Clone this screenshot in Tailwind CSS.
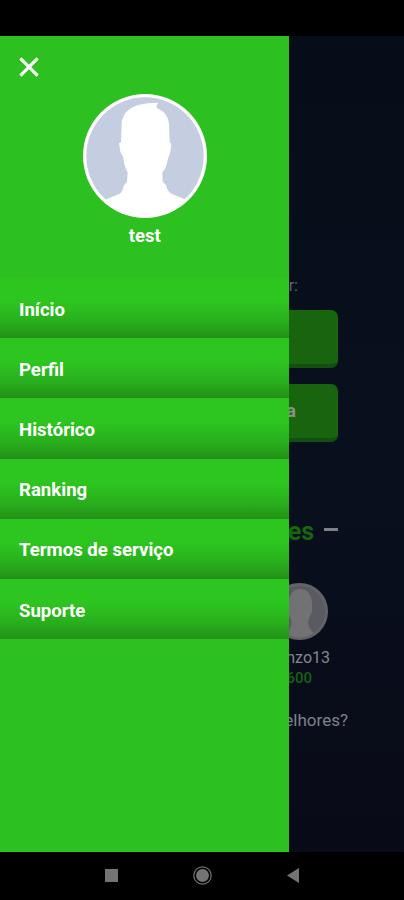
<!DOCTYPE html>
<html lang="pt-BR">
<head>
<meta charset="utf-8">
<meta name="viewport" content="width=device-width, initial-scale=1">
<title>Menu</title>
<script src="https://cdn.jsdelivr.net/npm/@tailwindcss/browser@4"></script>
</head>
<body class="bg-black">
<div class="flex h-[900px] w-[404px] flex-col overflow-hidden bg-black font-['Roboto',sans-serif]">
  <div class="h-[35.5px] shrink-0"></div>
  <div class="relative h-[816px] shrink-0 overflow-hidden bg-linear-to-b from-[#060d18] via-[#08101e] to-[#090a17]">
    <!-- Dimmed page behind the drawer -->
    <main class="flex h-full flex-col pt-[239px]">
      <p class="pr-[106px] text-right text-base leading-[22px] text-[#62666d]">Escolha como jogar:</p>
      <div class="mt-[13.5px] ml-[66px] h-[58px] w-[272px] rounded-[7px] border-b-4 border-[#12500f] bg-[#19640f]"></div>
      <div class="mt-[16px] ml-[66px] flex h-[58px] w-[272px] items-center justify-end rounded-[7px] border-b-4 border-[#12500f] bg-[#19640f] pr-[42px] text-lg font-bold text-[#8b918b]">Criar sala</div>
      <div class="mt-[73.5px] flex h-[32px] items-center justify-end gap-[10px] pr-[66px]">
        <h2 class="text-[25px] leading-8 font-bold text-[#16670f]">Melhores</h2>
        <span class="mb-[4px] h-[3px] w-[14px] bg-[#7d8087]"></span>
      </div>
      <svg class="mt-[35px] ml-[271px] size-[57px] shrink-0" viewBox="0 0 57 57">
        <circle cx="28.5" cy="28.5" r="27" fill="#595b60" stroke="#626367" stroke-width="3"/>
        <path d="M14 50Q22 46 20 37L17 30Q16 6 29 6Q40 6 41 20V29L38 35Q35 44 43 50Q29 59 14 50Z" fill="#727174"/>
      </svg>
      <p class="mt-[8px] pr-[74px] text-right text-base leading-5 text-[#85878d]">Enzo13</p>
      <p class="pr-[92px] text-right text-[15px] leading-5 font-medium text-[#185e14]">1600</p>
      <p class="mt-[22px] pr-[56px] text-right text-[17px] leading-5 text-[#7f8289]">Quem são os melhores?</p>
    </main>
    <!-- Navigation drawer -->
    <aside class="absolute inset-y-0 left-0 w-[288.5px] bg-[#2cc020] text-white">
      <div class="flex h-[242.5px] flex-col items-center">
        <svg class="mt-[21.5px] ml-[19px] size-[20px] shrink-0 self-start" viewBox="0 0 21 21" fill="none" stroke="white" stroke-width="3.3"><path d="M1.5 1.5L19.5 19.5M19.5 1.5L1.5 19.5"/></svg>
        <svg class="mt-[17px] ml-px size-[124px] shrink-0" viewBox="38 27 372 372">
          <defs><clipPath id="avatar"><circle cx="224" cy="213" r="181"/></clipPath></defs>
          <circle cx="224" cy="213" r="186" fill="white"/>
          <circle cx="224" cy="213" r="176" fill="#c5cde0"/>
          <path clip-path="url(#avatar)" fill="white" d="M103 345L148 326Q157 320 160 302L170 290L172 262Q162 245 158 215L150 200L146 175L152 172L154 110Q160 75 200 61Q235 51 264 54Q256 60 260 70Q292 82 296 115L298 172L303 177L300 200L292 225Q288 250 276 262L277 290L287 300Q291 320 303 326L350 345V400H103Z"/>
        </svg>
        <p class="mt-[6px] ml-px text-[18.5px] leading-6 font-bold">test</p>
      </div>
      <nav class="flex flex-col text-[18.6px] font-bold">
        <a class="flex h-[60.2px] items-center border-b border-[#239018] bg-linear-to-b from-[#2dc520] from-40% via-[#28ae1d] via-75% to-[#249218] pt-[6px] pl-[19px]">Início</a>
        <a class="flex h-[60.2px] items-center border-b border-[#239018] bg-linear-to-b from-[#2dc520] from-40% via-[#28ae1d] via-75% to-[#249218] pt-[6px] pl-[19px]">Perfil</a>
        <a class="flex h-[60.2px] items-center border-b border-[#239018] bg-linear-to-b from-[#2dc520] from-40% via-[#28ae1d] via-75% to-[#249218] pt-[6px] pl-[19px]">Histórico</a>
        <a class="flex h-[60.2px] items-center border-b border-[#239018] bg-linear-to-b from-[#2dc520] from-40% via-[#28ae1d] via-75% to-[#249218] pt-[6px] pl-[19px]">Ranking</a>
        <a class="flex h-[60.2px] items-center border-b border-[#239018] bg-linear-to-b from-[#2dc520] from-40% via-[#28ae1d] via-75% to-[#249218] pt-[6px] pl-[19px]">Termos de serviço</a>
        <a class="flex h-[60.2px] items-center border-b border-[#239018] bg-linear-to-b from-[#2dc520] from-40% via-[#28ae1d] via-75% to-[#249218] pt-[6px] pl-[19px]">Suporte</a>
      </nav>
    </aside>
  </div>
  <!-- System navigation bar -->
  <footer class="flex flex-1 items-center pb-px pl-[105px]">
    <span class="size-[13px] bg-[#747474]"></span>
    <svg class="ml-[75px] size-[19px]" viewBox="0 0 19 19"><circle cx="9.5" cy="9.5" r="8.7" fill="none" stroke="#747474" stroke-width="1.2"/><circle cx="9.5" cy="9.5" r="6.5" fill="#747474"/></svg>
    <svg class="ml-[75px] h-[15px] w-[12px]" viewBox="0 0 12 15"><path d="M0 7.5L12 0V15Z" fill="#747474"/></svg>
  </footer>
</div>
</body>
</html>
